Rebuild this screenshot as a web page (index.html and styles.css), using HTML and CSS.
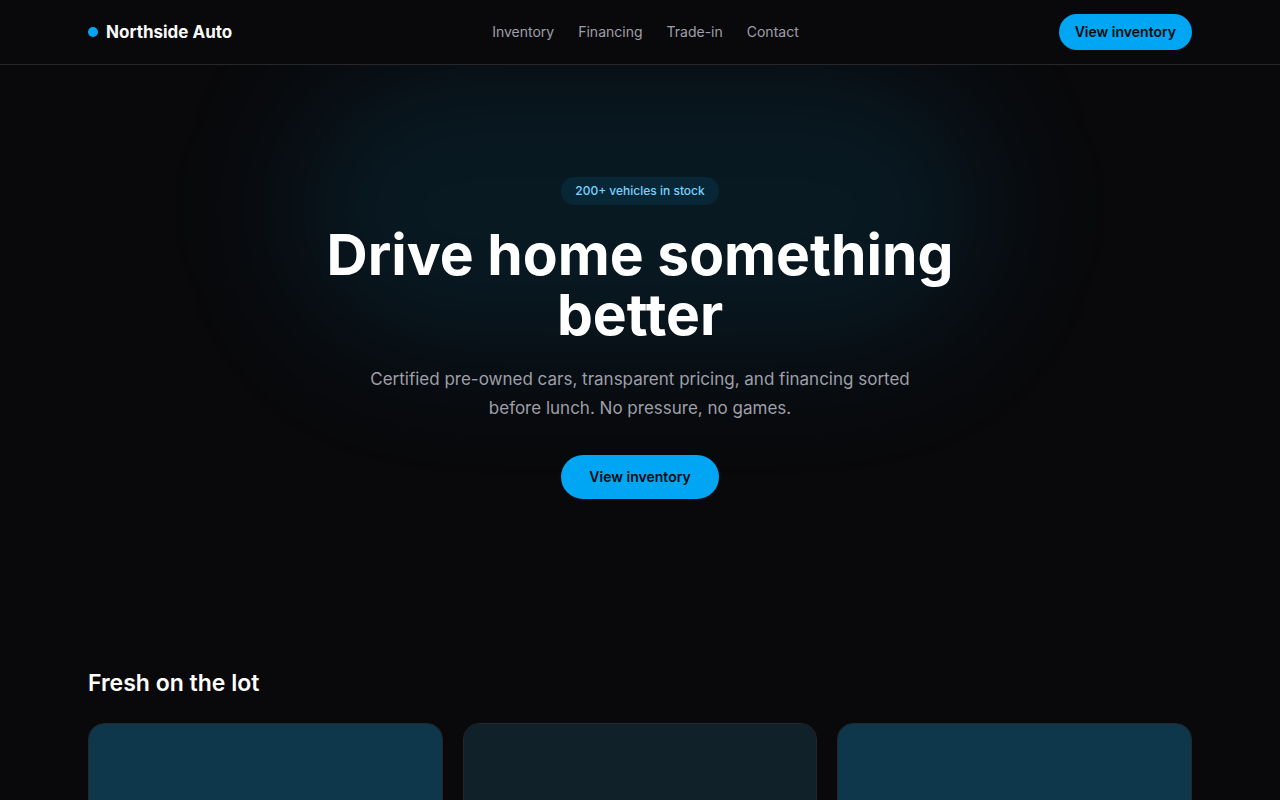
FILE: index.html
```html
<!DOCTYPE html>
<html lang="en">
<head>
    <meta charset="UTF-8">
    <meta name="viewport" content="width=device-width, initial-scale=1.0">
    <title>Northside Auto</title>
    <link rel="stylesheet" href="styles.css">
</head>
<body>
    <header class="site-header">
        <div class="container header-row">
            <a class="brand" href="#"><span class="brand-dot"></span>Northside Auto</a>
            <nav class="nav">
                <a href="#inventory">Inventory</a>
                <a href="#financing">Financing</a>
                <a href="#trade-in">Trade-in</a>
                <a href="#contact">Contact</a>
            </nav>
            <button class="btn" type="button">View inventory</button>
        </div>
    </header>

    <main>
        <section class="hero">
            <div class="hero-glow"></div>
            <div class="hero-content">
                <span class="badge">200+ vehicles in stock</span>
                <h1>Drive home something better</h1>
                <p>Certified pre-owned cars, transparent pricing, and financing sorted before lunch. No pressure, no games.</p>
                <button class="btn btn-large" type="button">View inventory</button>
            </div>
        </section>

        <section class="container lot" id="inventory">
            <h2>Fresh on the lot</h2>
            <div class="cards">
                <article class="card"><div class="card-photo"></div></article>
                <article class="card"><div class="card-photo card-photo-dim"></div></article>
                <article class="card"><div class="card-photo"></div></article>
            </div>
        </section>
    </main>
</body>
</html>
```
FILE: styles.css
```css
* {
    box-sizing: border-box;
}
body {
    margin: 0;
    background: #09090b;
    color: #fff;
    font-family: Inter, "Liberation Sans", sans-serif;
    font-size: 14px;
    line-height: 20px;
}
h1, h2, p {
    margin: 0;
}
a {
    color: inherit;
    text-decoration: none;
}
.container {
    max-width: 1152px;
    margin: 0 auto;
    padding: 0 24px;
}
.site-header {
    border-bottom: 1px solid #27272a;
}
.header-row {
    display: flex;
    align-items: center;
    justify-content: space-between;
    height: 64px;
}
.brand {
    display: flex;
    align-items: center;
    gap: 8px;
    color: #fafafa;
    font-size: 17px;
    font-weight: 700;
}
.brand-dot {
    width: 10px;
    height: 10px;
    border-radius: 50%;
    background: #00a6f4;
}
.nav {
    display: flex;
    gap: 24px;
    color: #9f9fa9;
}
.btn {
    padding: 8px 16px;
    border: 0;
    border-radius: 999px;
    background: #00a6f4;
    color: #09090b;
    font-family: inherit;
    font-size: 14px;
    font-weight: 600;
    line-height: 20px;
    cursor: pointer;
}
.btn-large {
    margin-top: 32px;
    padding: 12px 28px;
}
.hero {
    position: relative;
    overflow: hidden;
    padding: 112px 24px;
}
/* soft light behind the headline */
.hero-glow {
    position: absolute;
    top: 0;
    left: 50%;
    width: 700px;
    height: 288px;
    margin-left: -350px;
    border-radius: 999px;
    background: rgba(0, 166, 244, 0.1);
    filter: blur(64px);
}
.hero-content {
    position: relative;
    display: flex;
    flex-direction: column;
    align-items: center;
    max-width: 672px;
    margin: 0 auto;
    text-align: center;
}
.badge {
    padding: 6px 14px;
    border-radius: 999px;
    background: rgba(0, 166, 244, 0.1);
    color: #74d4ff;
    font-size: 12px;
    font-weight: 500;
    line-height: 16px;
}
h1 {
    margin-top: 20px;
    font-size: 57px;
    font-weight: 700;
    line-height: 60px;
}
.hero p {
    max-width: 560px;
    margin-top: 20px;
    color: #9f9fa9;
    font-size: 17px;
    line-height: 29px;
}
.lot {
    padding-top: 56px;
    padding-bottom: 56px;
}
h2 {
    font-size: 23px;
    font-weight: 600;
    line-height: 32px;
}
.cards {
    display: grid;
    grid-template-columns: repeat(3, 1fr);
    gap: 20px;
    margin-top: 24px;
}
.card {
    overflow: hidden;
    border: 1px solid #27272a;
    border-radius: 16px;
    background: #18181b;
}
.card-photo {
    height: 176px;
    background: #0e374c;
}
.card-photo-dim {
    background: #11212a;
}
```
